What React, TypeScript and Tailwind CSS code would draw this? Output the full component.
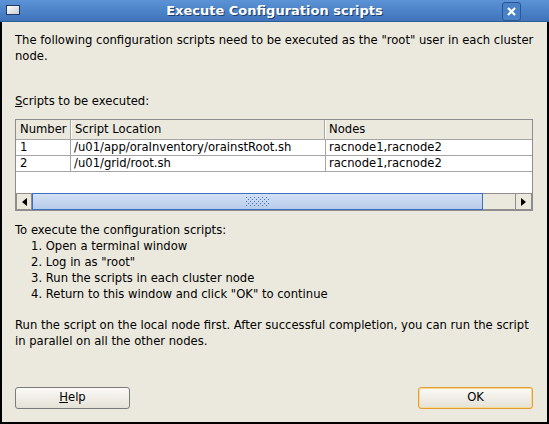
import { ReactNode } from "react";

const FONT = { fontFamily: '"DejaVu Sans", Verdana, sans-serif' };

function Arrow({ dir }: { dir: "left" | "right" }) {
  return (
    <svg width="5" height="8" viewBox="0 0 5 8">
      {dir === "left" ? (
        <path d="M5 0 L0 4 L5 8 Z" fill="#000" />
      ) : (
        <path d="M0 0 L5 4 L0 8 Z" fill="#000" />
      )}
    </svg>
  );
}

function Grip() {
  const dots = [];
  for (let r = 0; r < 5; r++) {
    for (let c = 0; c < 6; c++) {
      dots.push(
        <rect key={`${r}-${c}`} x={c * 4 + (r % 2) * 2} y={r * 2} width="1" height="1" fill="#3d6fc4" />,
      );
    }
  }
  return (
    <svg width="24" height="10" viewBox="0 0 24 10">
      {dots}
    </svg>
  );
}

function Button({ children, focused }: { children: ReactNode; focused?: boolean }) {
  return (
    <div
      className={
        focused
          ? "flex h-[22px] w-[115px] items-center justify-center rounded-[3px] border border-[#e0a030] bg-gradient-to-b from-[#fbfaf7] to-[#e4e1d6] shadow-[inset_0_0_0_1px_#f7d995]"
          : "flex h-[22px] w-[115px] items-center justify-center rounded-[3px] border border-[#7a7a7a] bg-gradient-to-b from-[#fbfaf7] to-[#e4e1d6]"
      }
    >
      {children}
    </div>
  );
}

const rows = [
  { n: "1", path: "/u01/app/oraInventory/orainstRoot.sh", nodes: "racnode1,racnode2" },
  { n: "2", path: "/u01/grid/root.sh", nodes: "racnode1,racnode2" },
];

export default function App() {
  return (
    <div className="flex h-[424px] w-[549px] flex-col bg-black text-[11.6px] text-black" style={FONT}>
      {/* title bar */}
      <div className="relative flex h-[22px] items-center justify-center border-b border-[#2f5d97] bg-gradient-to-b from-[#5b93d6] to-[#3f74bb]">
        <div className="absolute left-[6px] top-[5px] h-[10px] w-[14px] border border-[#1e3a66] bg-gradient-to-br from-white to-[#c9cdd3]" />
        <span className="text-[13px] font-bold text-white [text-shadow:1px_1px_0_#1c3f6e]">
          Execute Configuration scripts
        </span>
        <div className="absolute right-[28px] top-[2px] flex h-[19px] w-[19px] items-center justify-center rounded-[3px] border border-[#2a5793] bg-[#4a82c8]">
          <svg width="9" height="9" viewBox="0 0 9 9">
            <path d="M1 1 L8 8 M8 1 L1 8" stroke="#fff" strokeWidth="2.2" />
          </svg>
        </div>
      </div>

      {/* body */}
      <div className="flex flex-1 flex-col border-x-2 border-b-2 border-black bg-[#ebe9de] pl-[13px] pr-[14px]">
        <p className="mt-[10px] whitespace-nowrap leading-[16px]">
          The following configuration scripts need to be executed as the "root" user in each cluster
          <br />
          node.
        </p>

        <p className="mt-[29px] leading-[16px]">
          <span className="underline">S</span>cripts to be executed:
        </p>

        <div className="mt-[10px] flex h-[92px] w-[518px] flex-col border border-[#8e8e8e] bg-white">
          <div className="flex h-[20px] border-b border-[#a5a5a5] bg-[#ebe9de] leading-[19px]">
            <div className="w-[55px] border-r border-[#a5a5a5] pl-[4px]">Number</div>
            <div className="w-[254px] border-r border-[#a5a5a5] border-l border-l-white pl-[3px]">Script Location</div>
            <div className="flex-1 border-l border-l-white pl-[3px]">Nodes</div>
          </div>
          {rows.map((r) => (
            <div key={r.n} className="flex h-[16px] border-b border-[#a5a5a5] leading-[15px]">
              <div className="w-[55px] border-r border-[#a5a5a5] pl-[4px]">{r.n}</div>
              <div className="w-[255px] border-r border-[#a5a5a5] pl-[3px]">{r.path}</div>
              <div className="flex-1 pl-[3px]">{r.nodes}</div>
            </div>
          ))}
          <div className="flex-1" />
          <div className="flex h-[17px] items-stretch">
            <div className="flex w-[16px] items-center justify-center border border-[#8e8e8e] bg-[#ebe9de]">
              <Arrow dir="left" />
            </div>
            <div className="flex w-[451px] items-center justify-center border border-[#3b6fc2] bg-gradient-to-b from-[#d4e1f4] to-[#b6cbeb]">
              <Grip />
            </div>
            <div className="flex-1 border-y border-[#8e8e8e] bg-[#ebe9de]" />
            <div className="flex w-[17px] items-center justify-center border border-[#8e8e8e] bg-[#ebe9de]">
              <Arrow dir="right" />
            </div>
          </div>
        </div>

        <div className="mt-[11px] leading-[16px]">
          <p>To execute the configuration scripts:</p>
          <ol className="pl-[16px]">
            <li>1. Open a terminal window</li>
            <li>2. Log in as "root"</li>
            <li>3. Run the scripts in each cluster node</li>
            <li>4. Return to this window and click "OK" to continue</li>
          </ol>
        </div>

        <p className="mt-[15px] whitespace-nowrap leading-[16px]">
          Run the script on the local node first. After successful completion, you can run the script
          <br />
          in parallel on all the other nodes.
        </p>

        <div className="mt-auto mb-[13px] flex justify-between">
          <Button>
            <span>
              <span className="underline">H</span>elp
            </span>
          </Button>
          <Button focused>OK</Button>
        </div>
      </div>
    </div>
  );
}
